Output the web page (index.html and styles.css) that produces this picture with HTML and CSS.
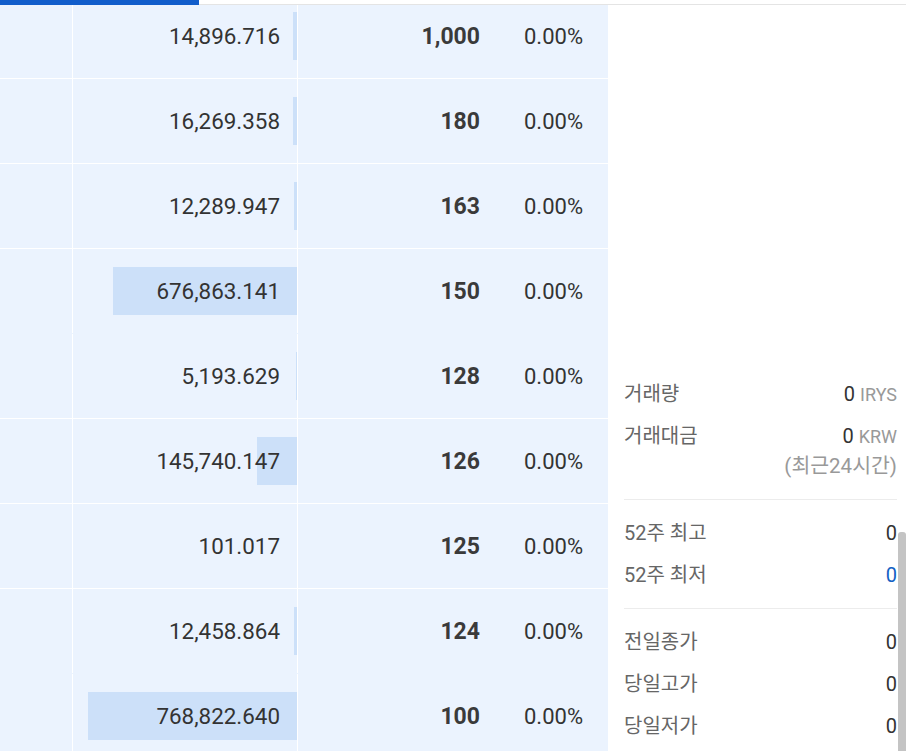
FILE: index.html
```html
<!DOCTYPE html>
<html lang="ko">
<head>
    <meta charset="UTF-8">
    <meta name="viewport" content="width=device-width, initial-scale=1.0">
    <title>호가 - IRYS/KRW</title>
    <link rel="stylesheet" href="styles.css">
</head>
<body>
    <div class="tabs">
        <div class="tab-active"></div>
    </div>

    <div class="main">
        <div class="book">
            <div class="book-rows">
                <div class="ask-row">
                    <div class="cell-side"></div>
                    <div class="cell-qty"><span class="qty-bar" style="width: 4px;"></span><span class="qty">14,896.716</span></div>
                    <div class="cell-price"><strong class="price">1,000</strong><span class="rate">0.00%</span></div>
                </div>
                <div class="ask-row">
                    <div class="cell-side"></div>
                    <div class="cell-qty"><span class="qty-bar" style="width: 4.4px;"></span><span class="qty">16,269.358</span></div>
                    <div class="cell-price"><strong class="price">180</strong><span class="rate">0.00%</span></div>
                </div>
                <div class="ask-row">
                    <div class="cell-side"></div>
                    <div class="cell-qty"><span class="qty-bar" style="width: 3.3px;"></span><span class="qty">12,289.947</span></div>
                    <div class="cell-price"><strong class="price">163</strong><span class="rate">0.00%</span></div>
                </div>
                <div class="ask-row no-line">
                    <div class="cell-side"></div>
                    <div class="cell-qty"><span class="qty-bar" style="width: 184px;"></span><span class="qty">676,863.141</span></div>
                    <div class="cell-price"><strong class="price">150</strong><span class="rate">0.00%</span></div>
                </div>
                <div class="ask-row">
                    <div class="cell-side"></div>
                    <div class="cell-qty"><span class="qty-bar" style="width: 1.4px;"></span><span class="qty">5,193.629</span></div>
                    <div class="cell-price"><strong class="price">128</strong><span class="rate">0.00%</span></div>
                </div>
                <div class="ask-row">
                    <div class="cell-side"></div>
                    <div class="cell-qty"><span class="qty-bar" style="width: 40px;"></span><span class="qty">145,740.147</span></div>
                    <div class="cell-price"><strong class="price">126</strong><span class="rate">0.00%</span></div>
                </div>
                <div class="ask-row">
                    <div class="cell-side"></div>
                    <div class="cell-qty"><span class="qty-bar" style="width: 0;"></span><span class="qty">101.017</span></div>
                    <div class="cell-price"><strong class="price">125</strong><span class="rate">0.00%</span></div>
                </div>
                <div class="ask-row no-line">
                    <div class="cell-side"></div>
                    <div class="cell-qty"><span class="qty-bar" style="width: 3.4px;"></span><span class="qty">12,458.864</span></div>
                    <div class="cell-price"><strong class="price">124</strong><span class="rate">0.00%</span></div>
                </div>
                <div class="ask-row">
                    <div class="cell-side"></div>
                    <div class="cell-qty"><span class="qty-bar" style="width: 209px;"></span><span class="qty">768,822.640</span></div>
                    <div class="cell-price"><strong class="price">100</strong><span class="rate">0.00%</span></div>
                </div>
            </div>
        </div>

        <aside class="info">
            <div class="info-spacer"></div>
            <div class="info-group">
                <div class="info-row">
                    <span class="info-label">거래량</span>
                    <span class="info-value">0 <em class="unit">IRYS</em></span>
                </div>
                <div class="info-row">
                    <span class="info-label">거래대금</span>
                    <span class="info-value">0 <em class="unit">KRW</em><span class="info-note">(최근24시간)</span></span>
                </div>
            </div>
            <div class="info-group">
                <div class="info-row">
                    <span class="info-label">52주 최고</span>
                    <span class="info-value">0</span>
                </div>
                <div class="info-row">
                    <span class="info-label">52주 최저</span>
                    <span class="info-value fall">0</span>
                </div>
            </div>
            <div class="info-group">
                <div class="info-row">
                    <span class="info-label">전일종가</span>
                    <span class="info-value">0</span>
                </div>
                <div class="info-row">
                    <span class="info-label">당일고가</span>
                    <span class="info-value">0</span>
                </div>
                <div class="info-row">
                    <span class="info-label">당일저가</span>
                    <span class="info-value">0</span>
                </div>
            </div>
        </aside>

        <div class="scroll-thumb"></div>
    </div>
</body>
</html>
```

FILE: styles.css
```css
body {
    margin: 0;
    width: 906px;
    height: 751px;
    overflow: hidden;
    font-family: Roboto, "Noto Sans CJK KR", sans-serif;
    color: #333;
    background: #fff;
}
.tabs {
    display: flex;
    height: 4px;
    border-bottom: 1px solid #e4e4e4;
}
.tab-active {
    flex: none;
    width: 199px;
    height: 5px;
    background: #115dcb;
}
.main {
    position: relative;
    display: flex;
    height: 746px;
    overflow: hidden;
}
.book {
    flex: none;
    width: 608px;
    background: #ebf3fe;
    overflow: hidden;
}
.book-rows {
    margin-top: -11px;
}
.ask-row {
    display: flex;
    height: 84px;
    border-bottom: 1px solid #fff;
}
.ask-row.no-line {
    border-bottom-color: transparent;
}
.cell-side {
    flex: none;
    width: 72px;
    border-right: 1px solid #fff;
}
.cell-qty {
    position: relative;
    flex: none;
    display: flex;
    align-items: center;
    justify-content: flex-end;
    width: 207px;
    padding-right: 17px;
    border-right: 1px solid #fff;
}
.qty-bar {
    position: absolute;
    right: 0;
    top: 18px;
    height: 48px;
    background: #cce0f9;
}
.qty {
    position: relative;
    font-size: 22.4px;
}
.cell-price {
    flex: 1;
    display: flex;
    align-items: center;
    font-size: 22px;
}
.price {
    width: 182px;
    text-align: right;
    font-size: 23px;
    font-weight: 700;
    color: #3a3a3a;
}
.rate {
    margin-left: auto;
    padding-right: 25px;
}
.info {
    flex: 1;
    padding: 0 9px 0 16px;
}
.info-spacer {
    height: 356px;
}
.info-group {
    padding: 12px 0;
    border-bottom: 1px solid #ececec;
}
.info-group:last-child {
    border-bottom: none;
}
.info-row {
    display: flex;
    justify-content: space-between;
    padding: 9px 0;
    font-size: 20px;
    line-height: 24px;
}
.info-label {
    color: #666;
}
.info-value {
    text-align: right;
}
.info-value.fall {
    color: #1261c4;
}
.unit {
    font-style: normal;
    font-size: 18px;
    line-height: 1;
    color: #999;
}
.info-note {
    display: block;
    margin-top: 6px;
    font-size: 20.5px;
    line-height: 24px;
    color: #999;
}
.scroll-thumb {
    position: absolute;
    right: 0;
    top: 527px;
    bottom: 0;
    width: 8px;
    border-radius: 3px 3px 0 0;
    background: #c4c4c4;
}
```
